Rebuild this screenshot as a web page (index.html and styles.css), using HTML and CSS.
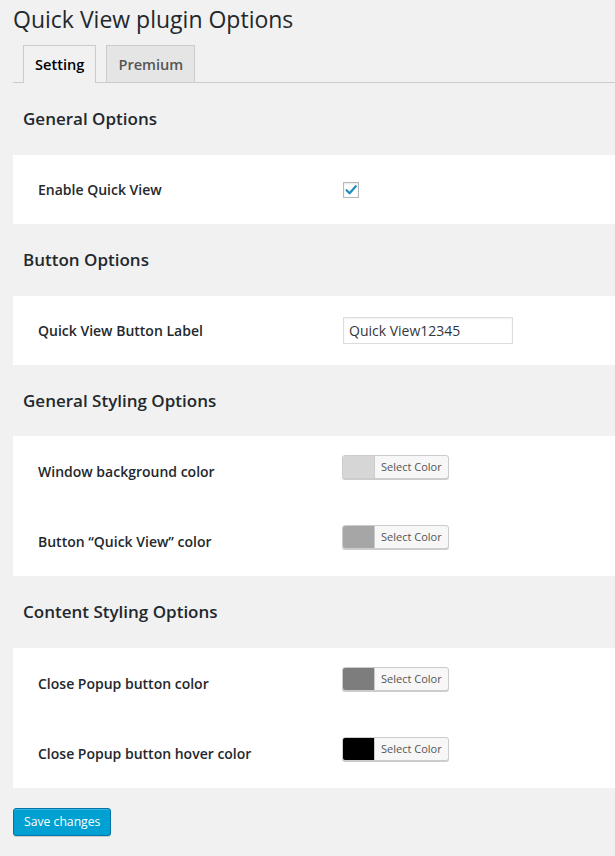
FILE: index.html
```html
<!DOCTYPE html>
<html>
<head>
<meta charset="utf-8">
<link rel="stylesheet" href="styles.css">
</head>
<body>
<div class="wrap">
  <h1 class="title">Quick View plugin Options</h1>
  <nav class="tabs">
    <a class="tab active">Setting</a>
    <a class="tab">Premium</a>
  </nav>

  <h2 class="section-title">General Options</h2>
  <div class="box">
    <div class="row">
      <div class="label">Enable Quick View</div>
      <div class="control">
        <span class="checkbox">
          <svg width="14" height="14" viewBox="0 0 14 14"><path d="M2.5 7.2 L5.6 10.2 L11.8 3.2" fill="none" stroke="#1e8cbe" stroke-width="2.2" stroke-linecap="round" stroke-linejoin="round"/></svg>
        </span>
      </div>
    </div>
  </div>

  <h2 class="section-title">Button Options</h2>
  <div class="box">
    <div class="row">
      <div class="label">Quick View Button Label</div>
      <div class="control"><input class="text-input" type="text" value="Quick View12345"></div>
    </div>
  </div>

  <h2 class="section-title section-title-tight">General Styling Options</h2>
  <div class="box">
    <div class="row">
      <div class="label">Window background color</div>
      <div class="control"><span class="color-btn"><span class="swatch swatch-1"></span><span class="color-text">Select Color</span></span></div>
    </div>
    <div class="row">
      <div class="label">Button “Quick View” color</div>
      <div class="control"><span class="color-btn"><span class="swatch swatch-2"></span><span class="color-text">Select Color</span></span></div>
    </div>
  </div>

  <h2 class="section-title">Content Styling Options</h2>
  <div class="box">
    <div class="row">
      <div class="label">Close Popup button color</div>
      <div class="control"><span class="color-btn"><span class="swatch swatch-3"></span><span class="color-text">Select Color</span></span></div>
    </div>
    <div class="row">
      <div class="label">Close Popup button hover color</div>
      <div class="control"><span class="color-btn"><span class="swatch swatch-4"></span><span class="color-text">Select Color</span></span></div>
    </div>
  </div>

  <div class="actions">
    <button class="save-btn">Save changes</button>
  </div>
</div>
</body>
</html>
```

FILE: styles.css
```css
html, body {
  margin: 0;
  padding: 0;
  background: #f1f1f1;
}
body {
  font-family: "Open Sans", "Noto Sans", sans-serif;
  color: #23282d;
  height: 856px;
}
.wrap {
  margin-left: 13px;
}
.title {
  margin: 0;
  padding-top: 5px;
  font-size: 23px;
  font-weight: 400;
  line-height: 29px;
  color: #23282d;
}
.tabs {
  display: flex;
  margin-top: 11px;
  border-bottom: 1px solid #ccc;
  height: 37px;
}
.tab {
  margin-left: 10px;
  padding: 6px 11px;
  border: 1px solid #ccc;
  border-bottom: none;
  background: #e5e5e5;
  color: #555;
  font-size: 14.6px;
  font-weight: 600;
  line-height: 24px;
  height: 24px;
}
.tab.active {
  background: #f1f1f1;
  color: #000;
  height: 25px;
  position: relative;
  z-index: 1;
}
.section-title {
  margin: 0;
  padding: 24px 0 24px 10px;
  font-size: 17px;
  font-weight: 600;
  line-height: 24px;
  color: #23282d;
}
.section-title-tight {
  padding-bottom: 23px;
}
.box {
  background: #fff;
}
.row {
  display: grid;
  grid-template-columns: 304px 1fr;
  align-items: center;
  height: 70px;
  padding-left: 25px;
}
.row:only-child {
  height: 69px;
}
.label {
  font-size: 14px;
  font-weight: 600;
  color: #23282d;
}
.control {
  display: flex;
  align-items: center;
}
.checkbox {
  display: inline-flex;
  align-items: center;
  justify-content: center;
  width: 14px;
  height: 14px;
  margin-left: 1px;
  border: 1px solid #b4b9be;
  background: #fff;
  box-shadow: inset 0 1px 2px rgba(0,0,0,0.1);
}
.text-input {
  width: 170px;
  height: 27px;
  box-sizing: border-box;
  margin: 0 0 0 1px;
  padding: 0 5px;
  border: 1px solid #ddd;
  box-shadow: inset 0 1px 2px rgba(0,0,0,0.07);
  font-family: "Open Sans", "Noto Sans", sans-serif;
  font-size: 14px;
  color: #32373c;
  background: #fff;
  outline: none;
}
.color-btn {
  display: inline-flex;
  height: 22px;
  border: 1px solid #ccc;
  border-radius: 3px;
  overflow: hidden;
  box-shadow: 0 1px 0 #ccc;
  background: #f7f7f7;
  margin-top: -8px;
}
.swatch {
  width: 31px;
  height: 22px;
  border-right: 1px solid #ccc;
}
.swatch-1 { background: #d6d6d6; }
.swatch-2 { background: #a6a6a6; }
.swatch-3 { background: #7d7d7d; }
.swatch-4 { background: #000; }
.color-text {
  padding: 0 6px 0 6px;
  font-size: 11px;
  line-height: 22px;
  color: #555;
}
.actions {
  padding-top: 20px;
}
.save-btn {
  height: 28px;
  padding: 0 10px;
  border: 1px solid #0073aa;
  border-radius: 3px;
  background: #00a0d2;
  box-shadow: inset 0 1px 0 rgba(120,200,230,0.5), 0 1px 0 rgba(0,0,0,0.15);
  color: #fff;
  font-family: "Open Sans", "Noto Sans", sans-serif;
  font-size: 12.2px;
  line-height: 26px;
}
```
